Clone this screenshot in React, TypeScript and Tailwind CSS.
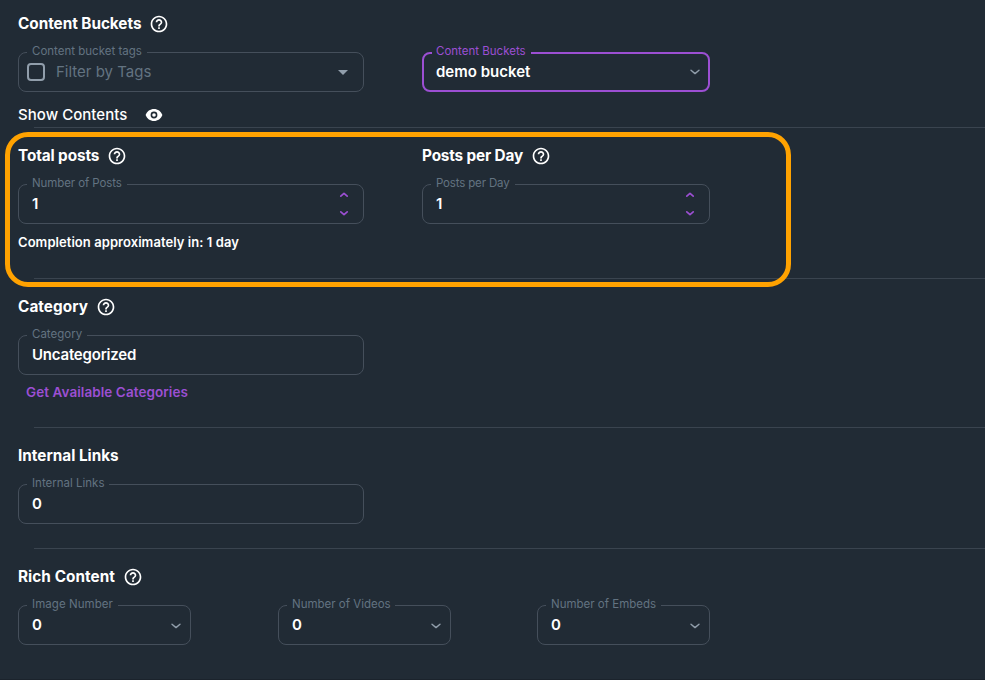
import type { ReactNode } from "react";

function HelpIcon() {
  return (
    <svg viewBox="0 0 24 24" className="h-5 w-5 shrink-0 fill-white">
      <path d="M11 18h2v-2h-2v2zm1-16C6.48 2 2 6.48 2 12s4.480 10 10 10 10-4.480 10-10S17.520 2 12 2zm0 18c-4.410 0-8-3.590-8-8s3.590-8 8-8 8 3.590 8 8-3.590 8-8 8zm0-14c-2.210 0-4 1.790-4 4h2c0-1.100.9-2 2-2s2 .9 2 2c0 2-3 1.750-3 5h2c0-2.250 3-2.500 3-5 0-2.210-1.790-4-4-4z" />
    </svg>
  );
}

function EyeIcon() {
  return (
    <svg viewBox="0 0 18 14" className="h-[14px] w-[18px] fill-white" fillRule="evenodd">
      <path d="M9 1C5.200 1 2 3.300.6 7 2 10.700 5.200 13 9 13s7-2.300 8.400-6C16 3.300 12.800 1 9 1zm0 9.400a3.400 3.400 0 1 1 0-6.800 3.400 3.400 0 0 1 0 6.800zM9 5.200a1.800 1.800 0 1 0 0 3.600 1.800 1.800 0 0 0 0-3.600z" />
    </svg>
  );
}

function Chevron() {
  return (
    <svg viewBox="0 0 10 6" className="h-[6px] w-[10px] fill-none stroke-[#919eab] stroke-[1.4]" strokeLinecap="round" strokeLinejoin="round">
      <path d="M1 1.200 5 4.600l4-3.400" />
    </svg>
  );
}

function Stepper() {
  return (
    <svg viewBox="0 0 10 26" className="mb-[1px] mr-[5px] h-[26px] w-[10px] fill-none stroke-[#9c4fd3] stroke-[1.7]" strokeLinecap="round" strokeLinejoin="round">
      <path d="M1.800 5.200 5 2.300l3.200 2.900M1.800 20.800 5 23.700l3.200-2.900" />
    </svg>
  );
}

function Heading({ text, track, help = true }: { text: string; track: string; help?: boolean }) {
  return (
    <h2 className="flex h-6 items-center gap-2 text-white">
      <span className={`whitespace-nowrap text-[15.3px] font-bold ${track}`}>{text}</span>
      {help && <HelpIcon />}
    </h2>
  );
}

function Field({ label, notch, width, focused, children }: { label: string; notch: string; width: string; focused?: boolean; children: ReactNode }) {
  return (
    <fieldset
      className={`h-[46px] rounded-lg ${width} ${focused ? "border-2 border-[#9c4fd3] pl-2" : "border border-[#454f5b] pl-2"}`}
    >
      <legend
        className={`whitespace-nowrap text-[11.5px] leading-[10px] ${notch} ${focused ? "h-[14px] pl-1 text-[#9c4fd3]" : "h-3 pl-[5px] text-[#637381]"}`}
      >
        {label}
      </legend>
      <div className={`flex items-center ${focused ? "h-6 pl-1 pr-[8px]" : "h-[29px] pl-[5px] pr-[9px]"}`}>{children}</div>
    </fieldset>
  );
}

function Value({ children }: { children: ReactNode }) {
  return <span className="flex-1 whitespace-nowrap text-[15px] font-semibold text-white">{children}</span>;
}

function Rule() {
  return <hr className="ml-[34px] border-[#3a444f]" />;
}

export default function App() {
  return (
    <main className="relative h-[680px] w-[985px] overflow-hidden border-b border-[#1b232c] bg-[#212b35] font-['Inter',sans-serif]">
      <section className="flex h-[127px] flex-col px-[18px] pt-3">
        <Heading text="Content Buckets" track="tracking-[-0.03px]" />
        <div className="mt-[10px] flex gap-[58px]">
          <Field label="Content bucket tags" notch="w-[120px]" width="w-[346px]">
            <span className="-ml-[5px] mb-[2px] h-[18px] w-[18px] rounded-[4px] border-2 border-[#919eab]" />
            <span className="ml-[11px] flex-1 text-[15px] text-[#637381]">Filter by Tags</span>
            <span className="mr-[6px] h-0 w-0 border-x-[5px] border-t-[5px] border-x-transparent border-t-[#919eab]" />
          </Field>
          <Field label="Content Buckets" notch="w-[99px]" width="w-[288px]" focused>
            <Value>demo bucket</Value>
            <Chevron />
          </Field>
        </div>
        <div className="mt-[11px] flex h-6 items-center gap-[17px] text-white">
          <span className="w-[110px] whitespace-nowrap text-[15px] font-[550] tracking-[0.04px]">Show Contents</span>
          <EyeIcon />
        </div>
      </section>
      <Rule />

      <section className="h-[150px] px-[18px] pt-4">
        <div className="flex gap-[58px]">
          <div className="w-[346px]">
            <Heading text="Total posts" track="tracking-[-0.1px]" />
            <div className="mt-[10px]">
              <Field label="Number of Posts" notch="w-[100px] tracking-[-0.09px]" width="w-[346px]">
                <Value>1</Value>
                <Stepper />
              </Field>
            </div>
            <p className="mt-[7px] whitespace-nowrap text-[13px] font-semibold leading-[22px] tracking-[0.06px] text-white">
              Completion approximately in: 1 day
            </p>
          </div>
          <div className="w-[288px]">
            <Heading text="Posts per Day" track="tracking-[-0.15px]" />
            <div className="mt-[10px]">
              <Field label="Posts per Day" notch="w-[84px] tracking-[-0.16px]" width="w-[288px]">
                <Value>1</Value>
                <Stepper />
              </Field>
            </div>
          </div>
        </div>
      </section>
      <Rule />

      <section className="h-[148px] px-[18px] pt-4">
        <Heading text="Category" track="tracking-[0.06px]" />
        <div className="mt-[10px]">
          <Field label="Category" notch="w-[60px]" width="w-[346px]">
            <Value><span className="tracking-[-0.2px]">Uncategorized</span></Value>
          </Field>
        </div>
        <button className="ml-2 mt-[6px] block whitespace-nowrap text-[13.5px] font-semibold leading-[22px] tracking-[0.07px] text-[#9c4fd3]">
          Get Available Categories
        </button>
      </section>
      <Rule />

      <section className="h-[120px] px-[18px] pt-4">
        <Heading text="Internal Links" track="tracking-[0px]" help={false} />
        <div className="mt-[10px]">
          <Field label="Internal Links" notch="w-[82px]" width="w-[346px]">
            <Value>0</Value>
          </Field>
        </div>
      </section>
      <Rule />

      <section className="px-[18px] pt-4">
        <Heading text="Rich Content" track="tracking-[0.06px]" />
        <div className="mt-[10px] flex gap-[87px]">
          <Field label="Image Number" notch="w-[91px] tracking-[0.06px]" width="w-[173px]">
            <Value>0</Value>
            <Chevron />
          </Field>
          <Field label="Number of Videos" notch="w-[108px]" width="w-[173px]">
            <Value>0</Value>
            <Chevron />
          </Field>
          <div className="-ml-px">
            <Field label="Number of Embeds" notch="w-[115px]" width="w-[173px]">
              <Value>0</Value>
              <Chevron />
            </Field>
          </div>
        </div>
      </section>

      {/* Highlight ring over the posts section */}
      <div className="pointer-events-none absolute left-[5px] top-[132px] h-[155px] w-[786px] rounded-[23px] border-[5px] border-[#ffa200]" />
    </main>
  );
}
